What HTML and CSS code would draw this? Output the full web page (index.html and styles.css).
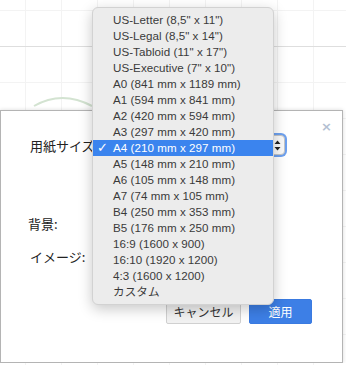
FILE: index.html
```html
<!DOCTYPE html>
<html lang="ja">
<head>
  <meta charset="UTF-8">
  <meta name="viewport" content="width=device-width, initial-scale=1.0">
  <title>ページ設定</title>
  <link rel="stylesheet" href="styles.css">
</head>
<body>

  <div class="canvas">
    <div class="guide-line"></div>
    <svg class="shape" width="120" height="40" viewBox="0 0 120 40">
      <path d="M34 30 Q62 14 92 30" fill="none" stroke="#d3e3d1" stroke-width="2"/>
    </svg>
  </div>

  <div class="dialog">
    <span class="close-dialog">&times;</span>

    <div class="form-row row-size">
      <label for="pageSize">用紙サイズ:</label>
      <div class="select-box" id="pageSize">
        <span class="select-arrows">
          <svg width="7" height="11" viewBox="0 0 7 11"><path d="M3.5 0.5 L6.5 4 L0.5 4 Z M3.5 10.5 L6.5 7 L0.5 7 Z" fill="#222"/></svg>
        </span>
      </div>
    </div>

    <div class="form-row row-bg">
      <label>背景:</label>
    </div>

    <div class="form-row row-image">
      <label>イメージ:</label>
    </div>

    <div class="dialog-buttons">
      <button type="button" class="btn-cancel">キャンセル</button>
      <button type="button" class="btn-apply">適用</button>
    </div>
  </div>

  <ul class="popup-menu">
    <li>US-Letter (8,5" x 11")</li>
    <li>US-Legal (8,5" x 14")</li>
    <li>US-Tabloid (11" x 17")</li>
    <li>US-Executive (7" x 10")</li>
    <li>A0 (841 mm x 1189 mm)</li>
    <li>A1 (594 mm x 841 mm)</li>
    <li>A2 (420 mm x 594 mm)</li>
    <li>A3 (297 mm x 420 mm)</li>
    <li class="selected">A4 (210 mm x 297 mm)</li>
    <li>A5 (148 mm x 210 mm)</li>
    <li>A6 (105 mm x 148 mm)</li>
    <li>A7 (74 mm x 105 mm)</li>
    <li>B4 (250 mm x 353 mm)</li>
    <li>B5 (176 mm x 250 mm)</li>
    <li>16:9 (1600 x 900)</li>
    <li>16:10 (1920 x 1200)</li>
    <li>4:3 (1600 x 1200)</li>
    <li>カスタム</li>
  </ul>

</body>
</html>
```

FILE: styles.css
```css
body {
  margin: 0;
  font-family: "Liberation Sans", "Noto Sans CJK JP", sans-serif;
  font-size: 13px;
  color: #222;
  background-color: #fff;
  background-image:
    linear-gradient(to right, #f3f3f3 1px, transparent 1px),
    linear-gradient(to bottom, #f3f3f3 1px, transparent 1px);
  background-size: 36px 36px;
  background-position: 25px 10px;
  overflow: hidden;
}

.canvas {
  height: 110px;
  position: relative;
}

.guide-line {
  position: absolute;
  left: 0;
  right: 0;
  top: 46px;
  border-top: 1px solid #dedede;
}

.shape {
  position: absolute;
  left: 0;
  top: 76px;
}

.dialog {
  position: relative;
  width: 343px;
  height: 253px;
  box-sizing: border-box;
  background: #fff;
  border: 1px solid #b4b4b4;
  box-shadow: 0 0 4px rgba(0,0,0,0.15);
  padding: 24px 30px 0 29px;
}

.close-dialog {
  position: absolute;
  right: 10px;
  top: 9px;
  font-size: 13px;
  font-weight: bold;
  line-height: 14px;
  color: #b3bfd2;
  font-family: "DejaVu Sans", sans-serif;
}

.form-row {
  display: flex;
  align-items: center;
  height: 20px;
}

.form-row label {
  width: 64px;
  white-space: nowrap;
  font-family: "Noto Sans CJK JP", sans-serif;
  font-size: 13px;
}

.row-bg {
  margin-top: 58px;
}

.row-bg label {
  margin-left: -2px;
}

.row-image {
  margin-top: 13px;
}

.select-box {
  flex: 1;
  height: 20px;
  margin-right: 27px;
  box-sizing: border-box;
  border: 1px solid #c6c6c6;
  border-radius: 4px;
  box-shadow: 0 0 0 2px #6ea1ef;
  background: #fafafa;
  display: flex;
  justify-content: flex-end;
  align-items: center;
  padding-right: 3px;
}

.select-arrows {
  display: flex;
}

.dialog-buttons {
  display: flex;
  justify-content: flex-end;
  gap: 8px;
  margin-top: 33px;
}

.dialog-buttons button {
  height: 25px;
  font-family: "Noto Sans CJK JP", sans-serif;
  font-size: 12px;
  border-radius: 2px;
  padding: 0;
  box-sizing: border-box;
}

.btn-cancel {
  width: 75px;
  background: #f2f2f2;
  color: #333;
  border: 1px solid #d0d0d0;
}

.btn-apply {
  width: 63px;
  background: #3d7fe6;
  color: #fff;
  border: 1px solid #3a7ae0;
}

.popup-menu {
  position: absolute;
  left: 92px;
  top: 7px;
  width: 182px;
  margin: 0;
  padding: 4px 0 4px;
  list-style: none;
  background: #ececec;
  border: 1px solid #d2d2d2;
  border-radius: 6px;
  box-shadow: 0 4px 14px rgba(0,0,0,0.22);
  box-sizing: border-box;
}

.popup-menu li {
  height: 16px;
  line-height: 16px;
  padding-left: 20px;
  font-size: 11.6px;
  letter-spacing: 0.05px;
  color: #3a3a3a;
  white-space: nowrap;
}

.popup-menu li.selected {
  background: #3b84ee;
  color: #fff;
  position: relative;
}

.popup-menu li.selected::before {
  content: "✓";
  position: absolute;
  left: 4px;
  font-family: "DejaVu Sans", sans-serif;
  font-weight: bold;
  font-size: 13px;
}
```
